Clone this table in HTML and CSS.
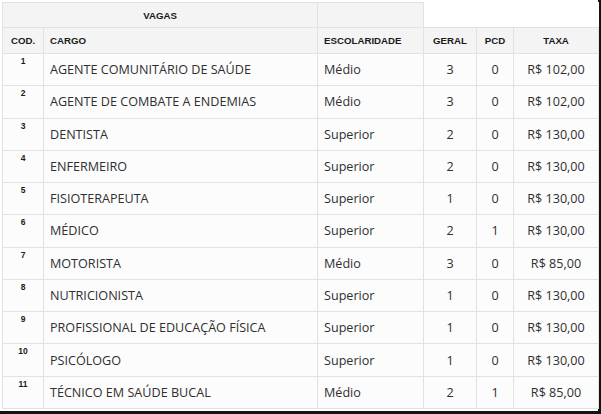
FILE: index.html
```
<!DOCTYPE html>
<html lang="pt-BR">
<head>
<meta charset="utf-8">
<link rel="stylesheet" href="styles.css">
</head>
<body>
<div class="frame">
<table class="vagas">
<colgroup>
<col class="c-cod"><col class="c-cargo"><col class="c-esc"><col class="c-geral"><col class="c-pcd"><col class="c-taxa">
</colgroup>
<thead>
<tr class="h1">
<th colspan="2" class="hd">VAGAS</th>
<th class="hd"></th>
<th colspan="3" class="blank"></th>
</tr>
<tr class="h2">
<th class="hd center">COD.</th>
<th class="hd left">CARGO</th>
<th class="hd left">ESCOLARIDADE</th>
<th class="hd center">GERAL</th>
<th class="hd center">PCD</th>
<th class="hd center">TAXA</th>
</tr>
</thead>
<tbody>
<tr><td class="cod">1</td><td>AGENTE COMUNITÁRIO DE SAÚDE</td><td>Médio</td><td class="num">3</td><td class="num">0</td><td class="num">R$ 102,00</td></tr>
<tr><td class="cod">2</td><td>AGENTE DE COMBATE A ENDEMIAS</td><td>Médio</td><td class="num">3</td><td class="num">0</td><td class="num">R$ 102,00</td></tr>
<tr><td class="cod">3</td><td>DENTISTA</td><td>Superior</td><td class="num">2</td><td class="num">0</td><td class="num">R$ 130,00</td></tr>
<tr><td class="cod">4</td><td>ENFERMEIRO</td><td>Superior</td><td class="num">2</td><td class="num">0</td><td class="num">R$ 130,00</td></tr>
<tr><td class="cod">5</td><td>FISIOTERAPEUTA</td><td>Superior</td><td class="num">1</td><td class="num">0</td><td class="num">R$ 130,00</td></tr>
<tr><td class="cod">6</td><td>MÉDICO</td><td>Superior</td><td class="num">2</td><td class="num">1</td><td class="num">R$ 130,00</td></tr>
<tr><td class="cod">7</td><td>MOTORISTA</td><td>Médio</td><td class="num">3</td><td class="num">0</td><td class="num">R$ 85,00</td></tr>
<tr><td class="cod">8</td><td>NUTRICIONISTA</td><td>Superior</td><td class="num">1</td><td class="num">0</td><td class="num">R$ 130,00</td></tr>
<tr><td class="cod">9</td><td>PROFISSIONAL DE EDUCAÇÃO FÍSICA</td><td>Superior</td><td class="num">1</td><td class="num">0</td><td class="num">R$ 130,00</td></tr>
<tr><td class="cod">10</td><td>PSICÓLOGO</td><td>Superior</td><td class="num">1</td><td class="num">0</td><td class="num">R$ 130,00</td></tr>
<tr><td class="cod">11</td><td>TÉCNICO EM SAÚDE BUCAL</td><td>Médio</td><td class="num">2</td><td class="num">1</td><td class="num">R$ 85,00</td></tr>
</tbody>
</table>
</div>
</body>
</html>
```
FILE: styles.css
```
html, body {
  margin: 0;
  padding: 0;
  background: #ffffff;
}
.frame {
  width: 601px;
  height: 414px;
  box-sizing: border-box;
  border-right: 3px solid #141414;
  border-bottom: 3px solid #141414;
  padding: 2px 0 0 2px;
  background: #ffffff;
}
.vagas {
  border-collapse: collapse;
  table-layout: fixed;
  width: 596px;
  font-family: "Open Sans", "Liberation Sans", sans-serif;
  font-size: 12.6px;
  color: #2f2f2f;
}
.c-cod { width: 41px; }
.c-cargo { width: 274px; }
.c-esc { width: 106px; }
.c-geral { width: 53px; }
.c-pcd { width: 37px; }
.c-taxa { width: 85px; }
.vagas th, .vagas td {
  border: 1px solid #e2e2e2;
  padding: 0;
}
.hd {
  background: #f4f4f4;
  font-family: "Liberation Sans", Arial, sans-serif;
  font-weight: bold;
  font-size: 9.7px;
  color: #1a1a1a;
  text-align: center;
  vertical-align: middle;
}
.hd.left { text-align: left; padding-left: 6px; }
.h1 { height: 25px; }
.h2 { height: 26px; }
.vagas th.blank {
  background: #ffffff;
  border-top-color: #ffffff;
  border-right-color: #ffffff;
}
.vagas tbody tr { height: 32.27px; }
.vagas td {
  background: #fcfcfc;
  padding-left: 6px;
  vertical-align: middle;
  white-space: nowrap;
}
.vagas td.cod {
  padding: 2px 0 0 0;
  vertical-align: top;
  text-align: center;
  font-family: "Liberation Sans", Arial, sans-serif;
  font-weight: bold;
  font-size: 8.5px;
  color: #1a1a1a;
}
.vagas td.num {
  padding: 0;
  text-align: center;
}
```
